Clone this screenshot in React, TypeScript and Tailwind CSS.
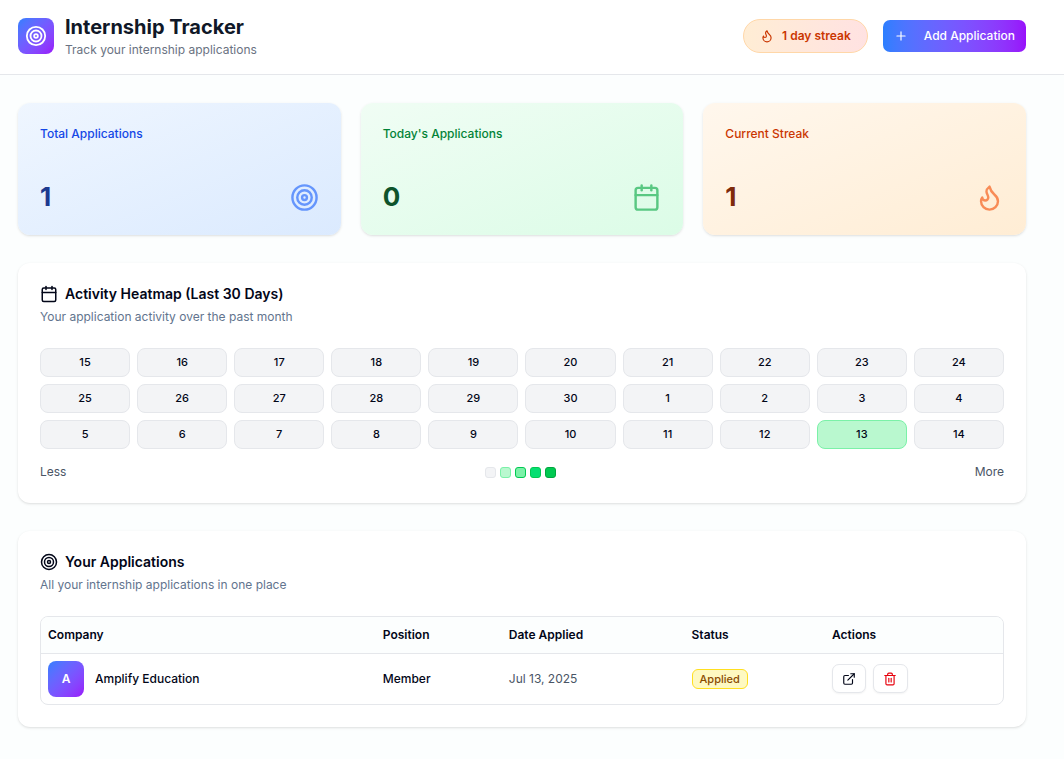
import React from 'react';
import { Calendar, ExternalLink, Flame, Plus, Target, Trash2 } from 'lucide-react';

const stats = [
  {
    label: 'Total Applications',
    value: 1,
    Icon: Target,
    card: 'from-blue-50 to-blue-100',
    labelColor: 'text-blue-700',
    valueColor: 'text-blue-900',
    iconColor: 'text-blue-600',
  },
  {
    label: "Today's Applications",
    value: 0,
    Icon: Calendar,
    card: 'from-green-50 to-green-100',
    labelColor: 'text-green-700',
    valueColor: 'text-green-900',
    iconColor: 'text-green-600',
  },
  {
    label: 'Current Streak',
    value: 1,
    Icon: Flame,
    card: 'from-orange-50 to-orange-100',
    labelColor: 'text-orange-700',
    valueColor: 'text-orange-900',
    iconColor: 'text-orange-600',
  },
];

const days = [
  15, 16, 17, 18, 19, 20, 21, 22, 23, 24, 25, 26, 27, 28, 29, 30, 1, 2, 3, 4, 5, 6, 7, 8, 9, 10, 11, 12, 13, 14,
].map((day, index) => ({ day, count: index === 28 ? 1 : 0 }));

const levels = [
  'bg-gray-100 border-gray-200',
  'bg-green-200 border-green-300',
  'bg-green-300 border-green-500',
  'bg-green-400 border-green-500',
  'bg-green-500 border-green-600',
];

const applications = [
  { company: 'Amplify Education', position: 'Member', date: 'Jul 13, 2025', status: 'Applied' },
];

function SectionHeading({ Icon, title, subtitle }: { Icon: typeof Target; title: string; subtitle: string }) {
  return (
    <div>
      <h2 className="flex items-center gap-[7px] text-[14px] leading-5 font-semibold">
        <Icon className="size-[18px]" />
        {title}
      </h2>
      <p className="mt-[3px] text-[12px] leading-5 text-slate-500">{subtitle}</p>
    </div>
  );
}

export default function App() {
  return (
    <div className="min-h-screen bg-[#fcfefe] font-['Inter',sans-serif] text-slate-950">
      <header className="flex items-center justify-between border-b border-gray-200 bg-white pt-[13px] pr-[38px] pb-[15px] pl-[18px]">
        <div className="flex items-center gap-[11px]">
          <div className="flex size-9 items-center justify-center rounded-lg bg-linear-to-br from-blue-500 to-purple-600 text-white">
            <Target className="size-[22px]" />
          </div>
          <div>
            <h1 className="text-[20px] leading-7 font-bold text-gray-900">Internship Tracker</h1>
            <p className="text-[12px] leading-[18px] text-gray-500">Track your internship applications</p>
          </div>
        </div>
        <div className="flex items-center gap-[15px]">
          <div className="flex h-[34px] items-center gap-2 rounded-full border border-orange-200 bg-linear-to-r from-orange-100 to-red-100 px-4 text-[12px] font-semibold text-orange-700">
            <Flame className="size-[14px]" />
            1 day streak
          </div>
          <button className="flex h-8 items-center gap-4 rounded-[7px] bg-linear-to-r from-blue-500 to-purple-600 px-[11px] text-[12px] font-medium text-white">
            <Plus className="size-[14px]" />
            Add Application
          </button>
        </div>
      </header>

      <main className="flex flex-col gap-7 pt-7 pr-[38px] pb-8 pl-[18px]">
        <section className="grid grid-cols-3 gap-5">
          {stats.map(({ label, value, Icon, card, labelColor, valueColor, iconColor }) => (
            <div key={label} className={`rounded-xl bg-linear-to-br px-[22px] py-5 shadow-sm ${card}`}>
              <h2 className={`text-[12px] leading-[22px] font-medium ${labelColor}`}>{label}</h2>
              <div className="mt-[34px] flex items-center justify-between">
                <span className={`text-[26px] leading-9 font-bold ${valueColor}`}>{value}</span>
                <Icon className={`size-[29px] opacity-60 ${iconColor}`} />
              </div>
            </div>
          ))}
        </section>

        <section className="rounded-xl bg-white px-[22px] pt-[21px] pb-[21px] shadow-sm">
          <SectionHeading Icon={Calendar} title="Activity Heatmap (Last 30 Days)" subtitle="Your application activity over the past month" />
          <div className="mt-[21px] grid grid-cols-10 gap-[7px]">
            {days.map(({ day, count }) => (
              <div
                key={day}
                className={`flex h-[29px] items-center justify-center rounded-lg border text-[11px] font-medium ${levels[count]}`}
              >
                {day}
              </div>
            ))}
          </div>
          <div className="mt-[13px] flex items-center justify-between text-[12px] leading-5 text-gray-600">
            <span>Less</span>
            <div className="flex gap-[4px]">
              {levels.map((level) => (
                <span key={level} className={`size-[11px] rounded-[3px] border ${level}`} />
              ))}
            </div>
            <span>More</span>
          </div>
        </section>

        <section className="rounded-xl bg-white px-[22px] pt-[21px] pb-[22px] shadow-sm">
          <SectionHeading Icon={Target} title="Your Applications" subtitle="All your internship applications in one place" />
          <div className="mt-[21px] overflow-hidden rounded-lg border border-gray-200">
            <table className="w-full table-fixed text-left text-[12px]">
              <colgroup>
                <col className="w-[34.8%]" />
                <col className="w-[13.1%]" />
                <col className="w-[19%]" />
                <col className="w-[14.6%]" />
                <col />
              </colgroup>
              <thead>
                <tr className="h-9 border-b border-gray-200 bg-[#fcfefe]">
                  {['Company', 'Position', 'Date Applied', 'Status', 'Actions'].map((title) => (
                    <th key={title} scope="col" className="px-[7px] font-semibold">
                      {title}
                    </th>
                  ))}
                </tr>
              </thead>
              <tbody>
                {applications.map(({ company, position, date, status }) => (
                  <tr key={company} className="h-[51px]">
                    <td className="px-[7px] font-medium">
                      <div className="flex items-center gap-[11px]">
                        <span className="flex size-9 items-center justify-center rounded-lg bg-linear-to-br from-blue-500 to-purple-600 font-semibold text-white">
                          {company[0]}
                        </span>
                        {company}
                      </div>
                    </td>
                    <td className="px-[7px] font-medium">{position}</td>
                    <td className="px-[7px] text-gray-600">{date}</td>
                    <td className="px-[7px]">
                      <span className="inline-flex h-5 items-center rounded-md border border-yellow-300 bg-yellow-100 px-[7px] text-[11px] font-medium text-yellow-800">
                        {status}
                      </span>
                    </td>
                    <td className="px-[7px]">
                      <div className="flex gap-[7px]">
                        <button
                          aria-label="Open posting"
                          className="flex h-[29px] w-[34px] items-center justify-center rounded-[7px] border border-gray-200 bg-white shadow-xs"
                        >
                          <ExternalLink className="size-[14px]" />
                        </button>
                        <button
                          aria-label="Delete application"
                          className="flex h-[29px] w-[35px] items-center justify-center rounded-[7px] border border-gray-200 bg-white text-red-600 shadow-xs"
                        >
                          <Trash2 className="size-[14px]" />
                        </button>
                      </div>
                    </td>
                  </tr>
                ))}
              </tbody>
            </table>
          </div>
        </section>
      </main>
    </div>
  );
}
